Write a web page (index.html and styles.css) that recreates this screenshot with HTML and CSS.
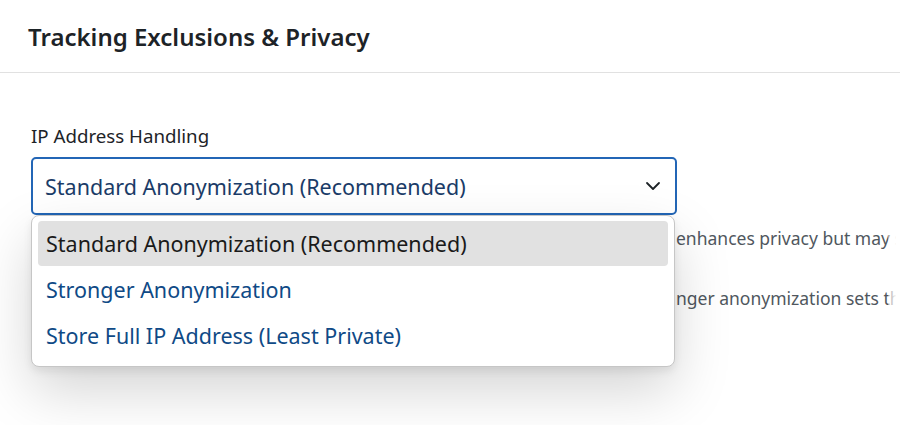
FILE: index.html
```html
<!DOCTYPE html>
<html lang="en">
<head>
    <meta charset="UTF-8">
    <meta name="viewport" content="width=device-width, initial-scale=1.0">
    <title>Tracking Exclusions &amp; Privacy</title>
    <link rel="stylesheet" href="styles.css">
</head>
<body>
    <div class="panel">
        <div class="panel-header">
            <h2>Tracking Exclusions &amp; Privacy</h2>
        </div>

        <div class="panel-body">
            <div class="field">
                <label class="field-label">IP Address Handling</label>
                <div class="select-wrap">
                    <div class="select open">
                        <span class="select-value">Standard Anonymization (Recommended)</span>
                        <svg class="chevron" width="16" height="10" viewBox="0 0 16 10">
                            <path d="M2 2 L8 8 L14 2" fill="none" stroke="#1d2327" stroke-width="1.8" stroke-linecap="round" stroke-linejoin="round"/>
                        </svg>
                    </div>

                    <!-- Open dropdown list -->
                    <ul class="options">
                        <li class="option selected">Standard Anonymization (Recommended)</li>
                        <li class="option">Stronger Anonymization</li>
                        <li class="option">Store Full IP Address (Least Private)</li>
                    </ul>
                </div>

                <!-- Help text, mostly covered by the open list -->
                <p class="help"><span class="help-lead">Standard anonymization removes the last octet and </span>enhances privacy but may slightly reduce location accuracy.</p>
                <p class="help second"><span class="help-lead">Recommended for most sites. Stro</span>nger anonymization sets the last two octets to zero.</p>
            </div>
        </div>
    </div>
</body>
</html>
```

FILE: styles.css
```css
body {
    font-family: "Noto Sans", "Open Sans", sans-serif;
    background-color: #fff;
    margin: 0;
    padding: 0;
    color: #1d2327;
}
.panel {
    position: relative;
    height: 425px;
    overflow: hidden;
}
.panel-header {
    height: 72px;
    padding-left: 28px;
    border-bottom: 1px solid #e1e1e1;
    display: flex;
    align-items: center;
}
.panel-header h2 {
    margin: 0;
    font-size: 24px;
    font-weight: 600;
    color: #1d2327;
}
.panel-body {
    padding: 51px 31px 0;
    position: relative;
}
.field-label {
    display: block;
    font-size: 18.7px;
    line-height: 24px;
    margin-bottom: 9px;
}
.select-wrap {
    position: relative;
    width: 646px;
}
.select {
    height: 54px;
    border: 2px solid #2366b6;
    border-radius: 5px;
    display: flex;
    align-items: center;
    justify-content: space-between;
    padding: 0 12px;
    background: #fff;
}
.select-value {
    font-size: 21.5px;
    color: #1b3c68;
}
.chevron {
    margin-right: 2px;
}

/* Dropdown list */
.options {
    list-style: none;
    margin: 0;
    padding: 5px 6px 8px;
    position: absolute;
    z-index: 10;
    top: 58px;
    left: 0;
    width: 644px;
    box-sizing: border-box;
    background: #fff;
    border: 1px solid #c6c6c6;
    border-radius: 8px;
    box-shadow: 0 4px 8px rgba(0, 0, 0, 0.08), 0 24px 56px rgba(0, 0, 0, 0.17);
}
.option {
    height: 46px;
    display: flex;
    align-items: center;
    padding-left: 8px;
    font-size: 21.5px;
    color: #0f4a86;
    border-radius: 4px;
}
.option.selected {
    background-color: #e1e1e1;
    color: #1a1a1a;
    height: 45px;
}

/* Help text behind the open list */
.help {
    margin: 11px 0 0;
    font-size: 17.5px;
    line-height: 24px;
    color: #50575e;
    white-space: nowrap;
}
.help.second {
    margin-top: 36px;
}
.help-lead {
    display: inline-block;
    width: 645px;
    overflow: hidden;
    vertical-align: bottom;
    white-space: nowrap;
    visibility: hidden;
}
.panel-body::after {
    content: "";
    position: absolute;
    top: 0;
    right: 0;
    width: 12px;
    height: 100%;
    background: linear-gradient(to right, rgba(255, 255, 255, 0.4), #fff 70%);
}
```
